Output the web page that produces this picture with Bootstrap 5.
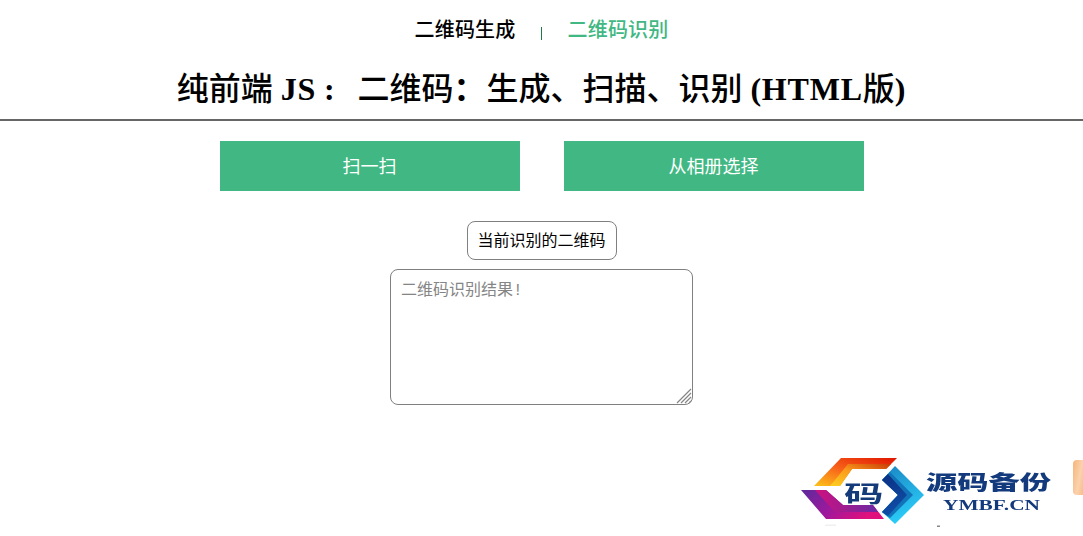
<!DOCTYPE html>
<html lang="zh-CN">

<head>
    <meta charset="UTF-8">
    <meta name="viewport" content="width=device-width, initial-scale=1">
    <title>二维码识别</title>
    <link href="https://cdn.jsdelivr.net/npm/bootstrap@5.3.3/dist/css/bootstrap.min.css" rel="stylesheet">
    <style>
        body {
            font-family: "Liberation Sans", "Noto Sans CJK SC", sans-serif;
            color: #000;
            overflow: hidden;
        }

        .qr-tabs {
            height: 60px;
            font-family: "Liberation Serif", "Noto Sans CJK SC", serif;
            line-height: 20px;
            font-weight: 500;
            padding-top: 20px;
        }

        .qr-tabs a {
            color: #000;
            font-size: 20px;
            letter-spacing: .2px;
            text-decoration: none;
        }

        .qr-tabs a.on {
            color: #41b883;
        }

        .qr-sep {
            width: 1px;
            height: 13px;
            margin: 7px 26px 0 25px;
            background: #1f7a4a;
        }

        .qr-title {
            height: 61px;
            margin: 0;
            padding-top: 8px;
            font-family: "Liberation Serif", "Noto Sans CJK SC", serif;
            font-size: 32px;
            line-height: 42px;
            font-weight: 500;
            border-bottom: 2px solid #666;
        }

        .qr-title b {
            font-weight: 700;
            letter-spacing: .8px;
        }

        .qr-colon {
            margin-right: 22px;
        }

        .qr-actions {
            gap: 44px;
            margin-top: 20px;
        }

        .qr-btn,
        .qr-btn:hover {
            width: 300px;
            height: 50px;
            padding-top: 8px;
            font-size: 18px;
            color: #fff;
            background: #41b883;
            border: 0;
            border-radius: 0;
        }

        .qr-label {
            width: 150px;
            height: 39px;
            margin-top: 30px;
            font-size: 16px;
            line-height: 37px;
            border: 1px solid #808080;
            border-radius: 8px;
        }

        .qr-field {
            width: 303px;
            margin-top: 9px;
        }

        .qr-result {
            display: block;
            width: 303px;
            height: 136px;
            padding: 9px 10px;
            font-family: "Liberation Mono", "Noto Sans CJK SC", monospace;
            font-size: 16px;
            line-height: 24px;
            border: 1px solid #808080;
            border-radius: 8px;
            outline: 0;
            resize: none;
        }

        .qr-result::placeholder {
            color: #858585;
        }

        .qr-grip {
            position: absolute;
            right: 1px;
            bottom: 1px;
            pointer-events: none;
        }

        .logo-mark {
            position: fixed;
            left: 800px;
            top: 456px;
        }

        .logo-edge {
            position: fixed;
            right: 0;
            top: 460px;
            width: 10px;
            height: 35px;
            background: linear-gradient(100deg, #f5b57a, #fbd2ad 60%, #f6bd88);
            border-radius: 4px 0 0 4px;
        }
    </style>
</head>

<body>

    <!-- Tabs -->
    <nav class="qr-tabs d-flex justify-content-center">
        <a href="#">二维码生成</a>
        <span class="qr-sep"></span>
        <a href="#" class="on">二维码识别</a>
    </nav>

    <h1 class="qr-title text-center">纯前端 <b>JS</b> <b class="qr-colon">:</b>二维码<b>：</b>生成、扫描、识别 <b>(HTML</b>版<b>)</b></h1>

    <!-- Buttons -->
    <div class="qr-actions d-flex justify-content-center">
        <button type="button" class="btn qr-btn">扫一扫</button>
        <button type="button" class="btn qr-btn">从相册选择</button>
    </div>

    <div class="d-flex flex-column align-items-center">
        <div class="qr-label text-center">当前识别的二维码</div>
        <div class="qr-field position-relative">
            <textarea class="qr-result" placeholder="二维码识别结果!"></textarea>
            <svg class="qr-grip" width="16" height="16" viewBox="0 0 16 16">
                <path d="M1 15 L15 1 M5 15 L15 5 M9 15 L15 9 M13 15 L15 13" stroke="#858585" stroke-width="1.2" fill="none" />
            </svg>
        </div>
    </div>

    <!-- Logo -->
    <svg class="logo-mark" width="256" height="72" viewBox="0 0 256 72">
        <defs>
            <linearGradient id="gTop" x1="0" y1="1" x2="1" y2="0">
                <stop offset="0" stop-color="#fcc41a" />
                <stop offset="0.45" stop-color="#f8641a" />
                <stop offset="1" stop-color="#e01400" />
            </linearGradient>
            <linearGradient id="gTopIn" x1="0" y1="1" x2="1" y2="0">
                <stop offset="0" stop-color="#fdd020" />
                <stop offset="0.5" stop-color="#fb9a1c" />
                <stop offset="1" stop-color="#c93a06" />
            </linearGradient>
            <linearGradient id="gLow" x1="0" y1="0" x2="1" y2="0.4">
                <stop offset="0" stop-color="#5d2a9c" />
                <stop offset="0.55" stop-color="#a0189c" />
                <stop offset="1" stop-color="#e0107c" />
            </linearGradient>
            <linearGradient id="gLowIn" x1="0" y1="0" x2="1" y2="0">
                <stop offset="0" stop-color="#d0107f" />
                <stop offset="1" stop-color="#6a2aa4" />
            </linearGradient>
            <linearGradient id="gRight" x1="0" y1="0" x2="0.3" y2="1">
                <stop offset="0" stop-color="#1a86c4" />
                <stop offset="1" stop-color="#2bcdf8" />
            </linearGradient>
            <linearGradient id="gRightIn" x1="0" y1="0" x2="0.3" y2="1">
                <stop offset="0" stop-color="#0b2f80" />
                <stop offset="1" stop-color="#0f4ea8" />
            </linearGradient>
        </defs>
        <path d="M14 30 L41 2 L97 2 L86 13 L52 13 L40 30 Z" fill="url(#gTop)" />
        <path d="M30 30 L48 8 L91 8 L86 13 L52 13 L40 30 Z" fill="url(#gTopIn)" />
        <path d="M1 34 L26 34 L43 49 L73 49 L84 63 L26 63 Z" fill="url(#gLow)" />
        <path d="M15 34 L26 34 L43 49 L73 49 L78 56 L35 56 Z" fill="url(#gLowIn)" />
        <path d="M95 10 L124 39 L95 68 L82 56 L98 39 L82 24 Z" fill="url(#gRight)" />
        <path d="M90 16 L113 39 L90 62 L82 56 L98 39 L82 24 Z" fill="#1274b8" />
        <path d="M88 18 L107 39 L88 60 L82 56 L98 39 L82 24 Z" fill="url(#gRightIn)" />
        <text transform="translate(44 46) scale(1.72 1)" font-family="'Noto Sans CJK SC', sans-serif" font-size="23" font-weight="700" fill="#143a7a" stroke="#fff" stroke-width="1.2" paint-order="stroke">码</text>
        <text x="126" y="34" font-family="'Noto Sans CJK SC', sans-serif" font-size="20" font-weight="900" fill="#123a7c" textLength="125" lengthAdjust="spacingAndGlyphs">源码备份</text>
        <text x="143" y="54" font-family="'Liberation Serif', serif" font-size="14" font-weight="700" fill="#123a7c" textLength="97" lengthAdjust="spacingAndGlyphs">YMBF.CN</text>
        <rect x="137" y="69.5" width="3" height="1.5" fill="#888" />
        <rect x="25" y="68.5" width="11" height="1.5" fill="#efefef" />
    </svg>
    <div class="logo-edge"></div>

    <script src="https://cdn.jsdelivr.net/npm/bootstrap@5.3.3/dist/js/bootstrap.bundle.min.js"></script>
</body>

</html>
